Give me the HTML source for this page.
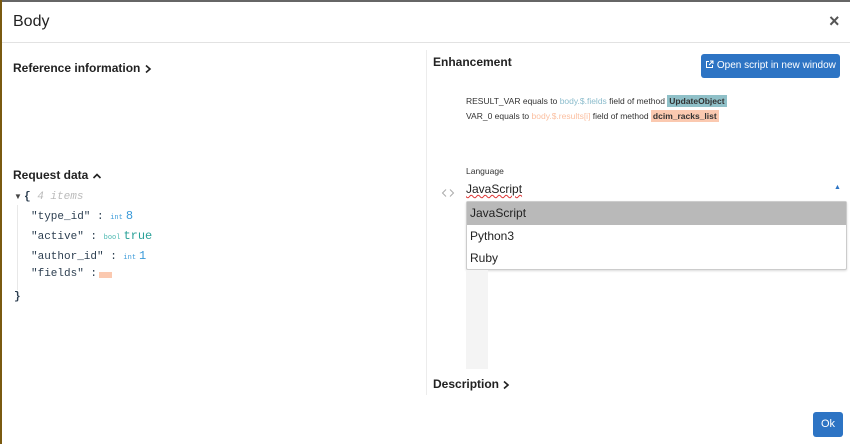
<!DOCTYPE html>
<html><head><style>
*{margin:0;padding:0;box-sizing:border-box}
body{width:850px;height:444px;overflow:hidden;background:#fff;font-family:"Liberation Sans",sans-serif;color:#222;position:relative}
.a{position:absolute;white-space:nowrap}
.b{font-weight:bold;font-size:12px}
.m{font-family:"Liberation Mono",monospace;font-size:11px;color:#2c3e50}
.t{font-size:7px;margin-right:3px}
svg{vertical-align:middle}
</style></head><body>
<div class="a" style="left:0;top:0;width:850px;height:2px;background:#666"></div>
<div class="a" style="left:0;top:0;width:2px;height:444px;background:#7a5a10"></div>
<div class="a" style="left:13px;top:13px;font-size:16px">Body</div>
<div class="a" style="left:829px;top:11px;font-size:18px;color:#555;font-weight:bold">×</div>
<div class="a" style="left:2px;top:42px;width:848px;height:1px;background:#e2e2e2"></div>
<div class="a" style="left:426px;top:50px;width:1px;height:345px;background:#ececec"></div>

<div class="a b" style="left:13px;top:61px">Reference information <svg width="8" height="10"><path d="M2 1.5 L6 5 L2 8.5" stroke="#222" stroke-width="1.6" fill="none"/></svg></div>
<div class="a b" style="left:13px;top:168px">Request data <svg width="10" height="8"><path d="M1.5 6 L5 2.5 L8.5 6" stroke="#222" stroke-width="1.6" fill="none"/></svg></div>
<div class="a" style="left:14px;top:192px;font-size:8px;color:#444">▼</div>
<div class="a" style="left:17px;top:205px;width:1px;height:85px;background:#e8e8e8"></div>
<div class="a m" style="left:24px;top:191px"><b>{</b> <i style="color:#bbb">4 items</i></div>
<div class="a m" style="left:31px;top:209px">"type_id" : <span class="t" style="color:#3a9ad9">int</span><span style="color:#3a9ad9;font-size:12px">8</span></div>
<div class="a m" style="left:31px;top:229px">"active" : <span class="t" style="color:#4ab8b0">bool</span><span style="color:#2aa198;font-size:12px">true</span></div>
<div class="a m" style="left:31px;top:249px">"author_id" : <span class="t" style="color:#3a9ad9">int</span><span style="color:#3a9ad9;font-size:12px">1</span></div>
<div class="a m" style="left:31px;top:268px">"fields" :</div>
<div class="a" style="left:99px;top:272px;width:13px;height:6px;background:#fbc9b0"></div>
<div class="a m" style="left:14px;top:291px"><b>}</b></div>

<div class="a b" style="left:433px;top:55px">Enhancement</div>
<div class="a" style="left:701px;top:54px;width:139px;height:24px;background:#2d74c4;border-radius:3px;color:#fff;font-size:10px;line-height:24px;text-align:center"><svg width="9" height="9" style="margin-top:-2px"><path d="M4 1.5H1.5V7.5H7.5V5 M5 1H8V4 M8 1L4 5" stroke="#fff" stroke-width="1" fill="none"/></svg> Open script in new window</div>
<div class="a" style="left:466px;top:96px;font-size:8.5px;color:#333">RESULT_VAR equals to <span style="color:#8bbccc">body.$.fields</span> field of method <b style="background:#8fc0c8;padding:1px 2px">UpdateObject</b></div>
<div class="a" style="left:466px;top:111px;font-size:8.5px;color:#333">VAR_0 equals to <span style="color:#fbbfa0">body.$.results[i]</span> field of method <b style="background:#fbc9b0;padding:1px 2px">dcim_racks_list</b></div>
<div class="a" style="left:466px;top:166px;font-size:8.5px;color:#333">Language</div>
<div class="a" style="left:441px;top:184px"><svg width="14" height="10"><path d="M5 1.5L1.5 5L5 8.5 M9 1.5L12.5 5L9 8.5" stroke="#aaa" stroke-width="1" fill="none"/></svg></div>
<div class="a" style="left:466px;top:182px;font-size:12px;text-decoration:underline wavy #d33;text-decoration-thickness:1px">JavaScript</div>
<div class="a" style="left:834px;top:184px;font-size:7px;color:#2d74c4">▲</div>
<div class="a" style="left:466px;top:201px;width:381px;height:69px;border:1px solid #ccc;border-radius:2px;background:#fff;font-size:12px;box-shadow:0 1px 2px rgba(0,0,0,.15)">
<div style="background:#b9b9b9;height:23px;line-height:23px;padding-left:3px">JavaScript</div>
<div style="height:22px;line-height:22px;padding-left:3px">Python3</div>
<div style="height:22px;line-height:22px;padding-left:3px">Ruby</div>
</div>
<div class="a" style="left:466px;top:270px;width:22px;height:99px;background:#f4f4f4"></div>
<div class="a b" style="left:433px;top:377px">Description <svg width="8" height="10"><path d="M2 1.5 L6 5 L2 8.5" stroke="#222" stroke-width="1.6" fill="none"/></svg></div>
<div class="a" style="left:813px;top:412px;width:30px;height:25px;background:#2d74c4;border-radius:3px;color:#fff;font-size:11px;line-height:25px;text-align:center">Ok</div>
</body></html>
